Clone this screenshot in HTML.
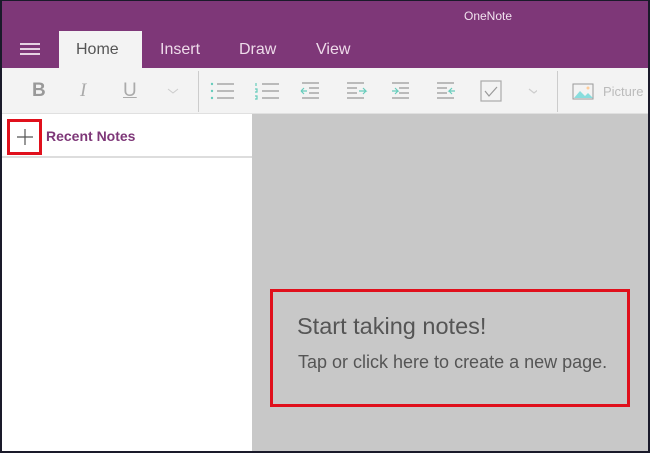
<!DOCTYPE html>
<html><head><style>
*{margin:0;padding:0;box-sizing:border-box}
body{width:650px;height:453px;overflow:hidden;background:#1a1a2a;font-family:"Liberation Sans",sans-serif;position:relative}
.a{position:absolute}
#frame{left:2px;top:1px;width:646px;height:450px;background:#c8c8c8;overflow:hidden}
</style></head><body>
<div id="frame" class="a">
<div class="a" style="left:0;top:0;width:646px;height:67px;background:#7e3778"></div>
<div class="a" style="left:462px;top:8px;color:#f1e3ef;font-size:12px">OneNote</div>
<div class="a" style="left:18px;top:42px;width:20px;height:2px;background:#e6d2e3;box-shadow:0 5px 0 #e6d2e3,0 10px 0 #e6d2e3"></div>
<div class="a" style="left:57px;top:30px;width:83px;height:38px;background:#f3f3f3"></div>
<div class="a" style="left:74px;top:40px;font-size:16px;color:#555">Home</div>
<div class="a" style="left:158px;top:40px;font-size:16px;color:#eedbea">Insert</div>
<div class="a" style="left:237px;top:40px;font-size:16px;color:#eedbea">Draw</div>
<div class="a" style="left:314px;top:40px;font-size:16px;color:#eedbea">View</div>
<div class="a" style="left:0;top:67px;width:646px;height:46px;background:#f3f3f3;border-bottom:1px solid #e0e0e0"></div>
<div class="a" style="left:30px;top:79px;font-size:19px;font-weight:bold;color:#999">B</div>
<div class="a" style="left:78px;top:79px;font-size:19px;font-style:italic;color:#aaa;font-family:'Liberation Serif',serif">I</div>
<div class="a" style="left:121px;top:79px;font-size:19px;text-decoration:underline;color:#aaa">U</div>
<svg class="a" style="left:165px;top:86px" width="12" height="8" fill="none"><path d="M1 2l5 4 5-4" stroke="#ccc"/></svg>
<div class="a" style="left:196px;top:70px;width:1px;height:41px;background:#ccc"></div>
<div class="a" style="left:555px;top:70px;width:1px;height:41px;background:#ccc"></div>
<svg class="a" style="left:205px;top:78px" width="330" height="26" stroke-width="1.2" fill="none">
<g stroke="#999"><path d="M10 5h17M10 12h17M10 19h17"/></g><g fill="#6cb"><circle cx="5" cy="5" r="1.2"/><circle cx="5" cy="12" r="1.2"/><circle cx="5" cy="19" r="1.2"/></g>
<g stroke="#999"><path d="M55 5h17M55 12h17M55 19h17M95 4h17M102 9h10M102 14h10M95 19h17M140 4h17M140 9h10M140 14h10M140 19h17M185 4h17M192 9h10M192 14h10M185 19h17M230 4h17M230 9h10M230 14h10M230 19h17"/></g>
<g stroke="#6cb"><path d="M49 4v3M48 10h2v3h-2M48 17h2v3h-2M94 12h6M94 12l3-3M94 12l3 3M152 12h7l-3-3M159 12l-3 3M185 12h6l-3-3M191 12l-3 3M248 12h-6l3-3M242 12l3 3"/></g>
<rect x="274" y="2" width="20" height="20" stroke="#aaa"/><path d="M278 12l4 5 8-9" stroke="#999"/>
<path d="M322 10l5 4 5-4" stroke="#ccc"/>
</svg>
<svg class="a" style="left:570px;top:82px" width="24" height="18" fill="none"><rect x="1" y="1" width="20" height="15" stroke="#999"/><path d="M2 15l6-7 5 5 3-3 5 5z" fill="#8dd"/><circle cx="16" cy="5" r="1.5" fill="#fc9"/></svg>
<div class="a" style="left:601px;top:83px;font-size:13px;color:#bbb">Picture</div>
<div class="a" style="left:0;top:113px;width:250px;height:340px;background:#fff"></div>
<div class="a" style="left:0;top:155px;width:250px;height:2px;background:#ddd"></div>
<div class="a" style="left:5px;top:118px;width:35px;height:36px;border:3px solid #e0101c"></div>
<svg class="a" style="left:14px;top:127px" width="18" height="18"><path d="M9 1v16M1 9h16" stroke="#555" stroke-width="1.2"/></svg>
<div class="a" style="left:44px;top:127px;font-size:14px;font-weight:bold;color:#7e3778">Recent Notes</div>
<div class="a" style="left:268px;top:288px;width:360px;height:118px;border:3px solid #e0101c"></div>
<div class="a" style="left:295px;top:312px;font-size:23.5px;color:#555">Start taking notes!</div>
<div class="a" style="left:296px;top:351px;font-size:18px;color:#555">Tap or click here to create a new page.</div>
</div>
</body></html>
